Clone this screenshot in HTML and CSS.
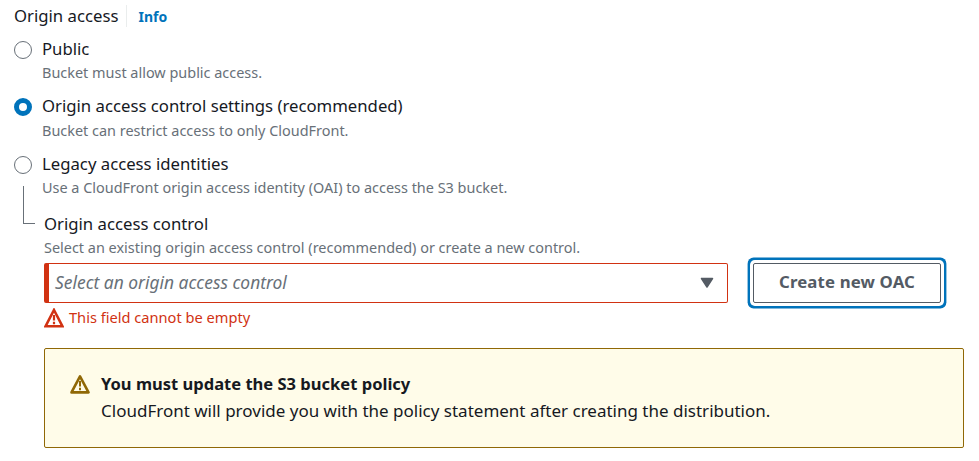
FILE: index.html
```html
<!DOCTYPE html>
<html lang="en">
<head>
<meta charset="utf-8">
<title>Origin access</title>
<link rel="stylesheet" href="styles.css">
</head>
<body>
<main class="form">
  <header class="heading"><span class="label">Origin access</span><a class="info">Info</a></header>
  <div class="option">
    <span class="radio"></span>
    <div><div class="label">Public</div><div class="hint">Bucket must allow public access.</div></div>
  </div>
  <div class="option second">
    <span class="radio checked"></span>
    <div><div class="label">Origin access control settings (recommended)</div><div class="hint hint-low">Bucket can restrict access to only CloudFront.</div></div>
  </div>
  <div class="option third">
    <span class="radio"></span>
    <div><div class="label">Legacy access identities</div><div class="hint">Use a CloudFront origin access identity (OAI) to access the S3 bucket.</div></div>
  </div>
  <section class="nested">
    <span class="branch"></span>
    <div class="label">Origin access control</div>
    <div class="hint">Select an existing origin access control (recommended) or create a new control.</div>
    <div class="controls">
      <div class="select"><span class="placeholder">Select an origin access control</span>
        <svg class="caret" viewBox="0 0 14 12"><path d="M1.5 1.5h11L7 10z" fill="#545b64" stroke="#545b64" stroke-width="1.5" stroke-linejoin="round"/></svg>
      </div>
      <button class="create"><span>Create new OAC</span></button>
    </div>
    <div class="error">
      <svg class="warn" viewBox="0 0 20 20"><path d="M10 2L18.4 18.2H1.6z" fill="none" stroke="currentColor" stroke-width="2.6"/><path d="M10 7v5.5M10 13.8v2.4" stroke="currentColor" stroke-width="2.2"/></svg>
      <span>This field cannot be empty</span>
    </div>
    <div class="alert">
      <svg class="warn" viewBox="0 0 20 20"><path d="M10 2.3L18.5 18.4H1.5z" fill="none" stroke="currentColor" stroke-width="2.6" stroke-linejoin="round"/><path d="M10 7v5.5M10 13.8v2.4" stroke="currentColor" stroke-width="2"/></svg>
      <div class="message"><strong>You must update the S3 bucket policy</strong><p>CloudFront will provide you with the policy statement after creating the distribution.</p></div>
    </div>
  </section>
</main>
</body>
</html>
```
FILE: styles.css
```css
* { box-sizing: border-box; }
body {
  margin: 0;
  background: #fff;
  color: #16191f;
  font-family: "Noto Sans", "Open Sans", sans-serif;
  font-size: 16px;
  line-height: 22px;
  white-space: nowrap;
}
.form { padding: 5px 15px 0 14px; }
.heading { display: flex; height: 22px; }
.label { height: 22px; font-size: 16.73px; }
.info {
  margin-left: 8px;
  padding-left: 11px;
  border-left: 1px solid #eaeded;
  color: #0073bb;
  font-size: 14px;
  font-weight: 700;
  line-height: 23px;
}
.option { display: flex; gap: 10px; height: 45px; margin-top: 11px; }
.second { margin-top: 12px; }
.third { margin-top: 13px; }
.radio {
  flex: none;
  width: 18px;
  height: 18px;
  margin-top: 2.5px;
  border: 1.5px solid #687078;
  border-radius: 50%;
}
.checked { border: 5.5px solid #0073bb; }
.hint { margin-top: 3px; color: #687078; font-size: 14.45px; line-height: 20px; }
.hint-low { margin-top: 4px; }
.nested { position: relative; margin: 15px 0 0 30px; }
.branch {
  position: absolute;
  left: -21px;
  top: -27px;
  width: 12px;
  height: 38px;
  border: solid #687078;
  border-width: 0 0 1px 1px;
}
.controls { display: flex; gap: 25px; margin-top: 5px; }
.select {
  display: flex;
  align-items: center;
  justify-content: space-between;
  width: 684px;
  height: 40px;
  padding: 0 13px 0 6px;
  border: 1px solid #d13212;
  border-left-width: 5px;
  border-radius: 2px;
}
.placeholder { padding-bottom: 2px; color: #687078; font-size: 17.4px; font-style: italic; }
.caret { width: 14px; height: 12px; }
.create {
  width: 188px;
  height: 40px;
  padding: 0 0 2px;
  border: 1px solid #545b64;
  border-radius: 2px;
  box-shadow: 0 0 0 3px #fff, 0 0 0 5.4px #0073bb;
  background: #fff;
  color: #545b64;
  font: 700 16.8px/22px "Noto Sans", sans-serif;
  letter-spacing: 0.15px;
}
.error { display: flex; gap: 5px; height: 20px; margin-top: 5px; color: #d13212; font-size: 14.62px; line-height: 18px; }
.warn { flex: none; width: 20px; height: 20px; }
.alert {
  display: flex;
  gap: 11px;
  height: 100px;
  margin-top: 20px;
  padding: 25px;
  border: 1px solid #906806;
  border-radius: 2px;
  background: #fffce9;
}
.alert .warn { color: #906806; }
.message { line-height: 27px; margin-top: -4px; }
.message strong { display: block; font-size: 16.55px; font-weight: 700; }
.message p { margin: 0; font-size: 17px; }
```
